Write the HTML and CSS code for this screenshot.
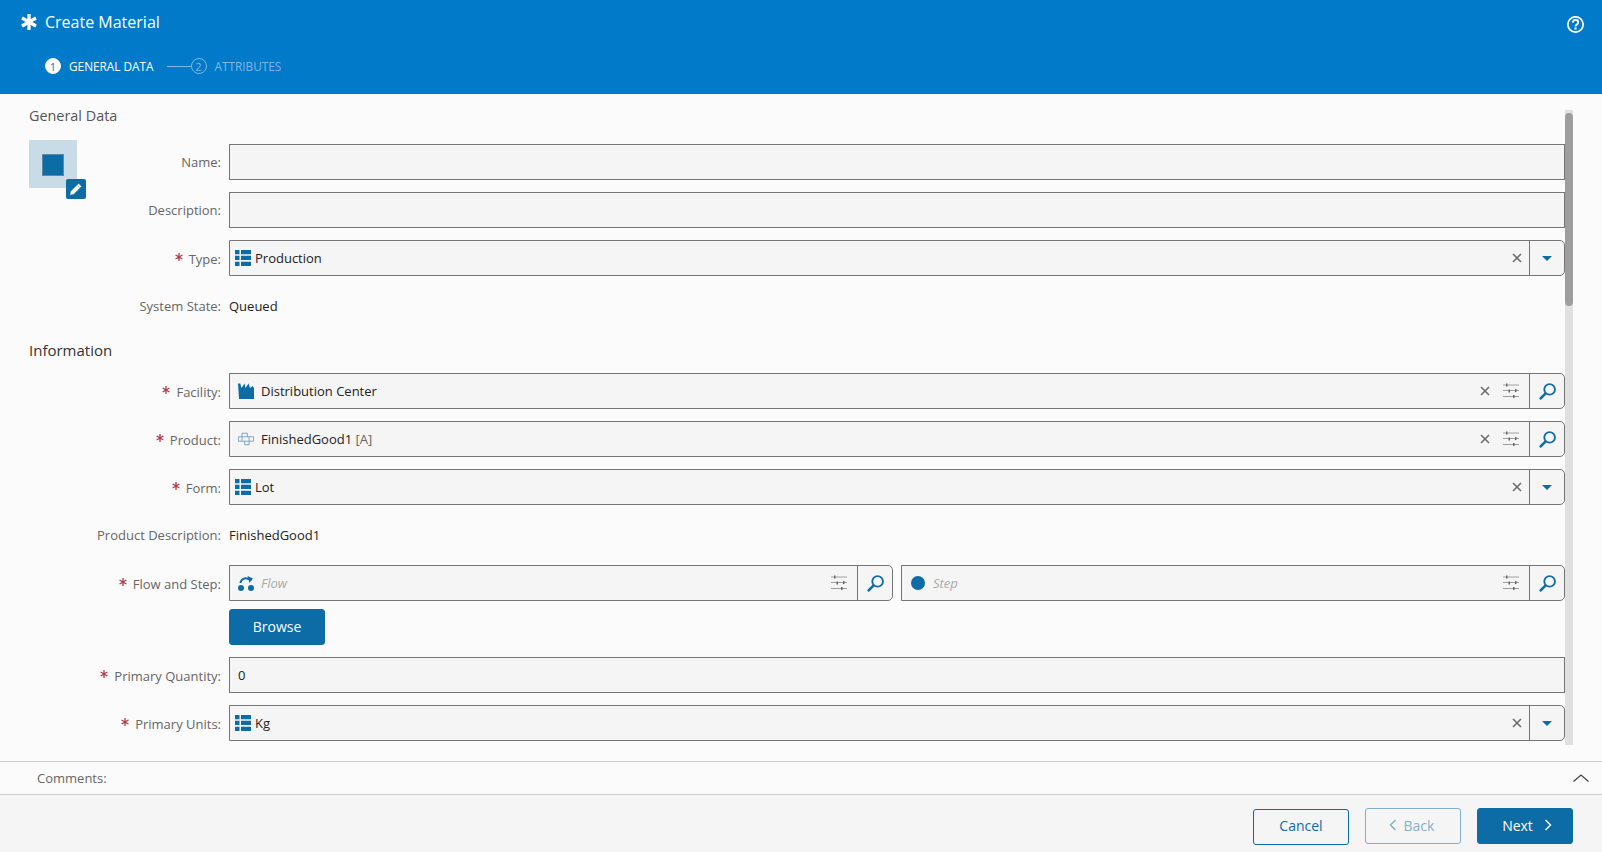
FILE: index.html
```html
<!DOCTYPE html>
<html lang="en">
<head>
<meta charset="utf-8">
<title>Create Material</title>
<link rel="stylesheet" href="styles.css">
</head>
<body>
<svg class="defs" width="0" height="0" aria-hidden="true">
  <symbol id="i-list" viewBox="0 0 16 16"><path d="M0 0h4.500v4.300H0zM6 0h10v4.300H6zM0 5.800h4.500v4.300H0zM6 5.800h10v4.300H6zM0 11.700h4.500V16H0zM6 11.700h10V16H6z" fill="currentColor"/></symbol>
  <symbol id="i-x" viewBox="0 0 10 10"><path d="M1 1l8 8M9 1L1 9" stroke="currentColor" stroke-width="1.600" fill="none"/></symbol>
  <symbol id="i-sliders" viewBox="0 0 16 16"><path d="M0 2h16M0 7.500h16M0 13.500h16" stroke="#a0a0a0" fill="none"/><path d="M3 .5h1.500v3H3zM12 6h1.500v3H12zM5.500 6.500h1.500v3H5.500zM10 12h1.500v3H10z" fill="#666"/></symbol>
  <symbol id="i-search" viewBox="0 0 16 16"><circle cx="10" cy="6" r="5" stroke="currentColor" stroke-width="1.700" fill="none"/><path d="M6.500 9.500L.8 15.200" stroke="currentColor" stroke-width="2.400" fill="none"/></symbol>
  <symbol id="i-star" viewBox="0 0 10 10"><path d="M5 0v10M.7 2.500l8.600 5M9.300 2.500l-8.600 5" stroke="currentColor" stroke-width="1.600" fill="none"/></symbol>
</svg>

<header class="top">
  <div class="title-bar">
    <div class="title-group">
      <svg class="title-icon" viewBox="0 0 16 16"><path d="M8 0v16M1 4l14 8M15 4L1 12" stroke="#fff" stroke-width="3.200" fill="none"/></svg>
      <span class="title">Create Material</span>
    </div>
    <svg class="help" viewBox="0 0 16 16"><circle cx="8" cy="8" r="7.200" stroke="#fff" stroke-width="1.600" fill="none"/><path d="M5.400 6.200C5.500 4.600 6.600 3.700 8 3.700c1.500 0 2.600 1 2.600 2.300 0 1.900-2.600 2-2.600 3.800" stroke="#fff" stroke-width="1.700" fill="none"/><rect x="7" y="10.800" width="2" height="2" fill="#fff"/></svg>
  </div>
  <div class="steps">
    <span class="step-num active">1</span>
    <span class="step-label active">GENERAL DATA</span>
    <span class="step-line"></span>
    <span class="step-num">2</span>
    <span class="step-label">ATTRIBUTES</span>
  </div>
</header>

<main class="content">
  <div class="form">
    <section class="section">
      <h2 class="heading general">General Data</h2>
      <div class="tile">
        <span class="tile-square"></span>
        <span class="tile-edit">
          <svg viewBox="0 0 14 14" width="14" height="14"><path d="M9.600 1.300l3.100 3.100-8 8L.8 13.200l.8-3.900zM8.500 3.400l2.100 2.100" fill="#fff" stroke="#0d6ca6" stroke-width=".6"/></svg>
        </span>
      </div>
      <div class="row"><label class="label bare">Name:</label><div class="field plain"></div></div>
      <div class="row"><label class="label bare">Description:</label><div class="field plain"></div></div>
      <div class="row"><label class="label"><svg class="req"><use href="#i-star"/></svg>Type:</label>
        <div class="field">
          <svg class="ic-list"><use href="#i-list"/></svg><span class="val list-val">Production</span>
          <svg class="ic-x"><use href="#i-x"/></svg>
          <span class="btn-cell"><span class="caret"></span></span>
        </div>
      </div>
      <div class="row"><label class="label bare">System State:</label><span class="val">Queued</span></div>
    </section>

    <section class="section">
      <h2 class="heading info">Information</h2>
      <div class="row"><label class="label"><svg class="req"><use href="#i-star"/></svg>Facility:</label>
        <div class="field">
          <svg class="ic-lead" viewBox="0 0 16 16"><path d="M0 .5h2.200L3.500 5 6.500.5 7.500 5l3-4.500L12 5l2.500-2L16 5v11H1z" fill="#0d6ca6"/></svg>
          <span class="val">Distribution Center</span>
          <svg class="ic-x lookup-x"><use href="#i-x"/></svg>
          <svg class="ic-sliders"><use href="#i-sliders"/></svg>
          <span class="btn-cell"><svg class="ic-search"><use href="#i-search"/></svg></span>
        </div>
      </div>
      <div class="row"><label class="label"><svg class="req"><use href="#i-star"/></svg>Product:</label>
        <div class="field">
          <svg class="ic-lead" viewBox="0 0 18 16"><path d="M.5 5.500h17v5H.5zM4.500 5.500V1.500h6v4M7.500 10.500v4h5v-4" fill="none" stroke="#6f9ec2"/><path d="M4.500 5.500v5M12.500 5.500v5" stroke="#6f9ec2" fill="none"/></svg>
          <span class="val">FinishedGood1 <span class="muted">[A]</span></span>
          <svg class="ic-x lookup-x"><use href="#i-x"/></svg>
          <svg class="ic-sliders"><use href="#i-sliders"/></svg>
          <span class="btn-cell"><svg class="ic-search"><use href="#i-search"/></svg></span>
        </div>
      </div>
      <div class="row"><label class="label"><svg class="req"><use href="#i-star"/></svg>Form:</label>
        <div class="field">
          <svg class="ic-list"><use href="#i-list"/></svg><span class="val list-val">Lot</span>
          <svg class="ic-x"><use href="#i-x"/></svg>
          <span class="btn-cell"><span class="caret"></span></span>
        </div>
      </div>
      <div class="row"><label class="label bare">Product Description:</label><span class="val">FinishedGood1</span></div>
      <div class="row row-tight"><label class="label"><svg class="req"><use href="#i-star"/></svg>Flow and Step:</label>
        <div class="pair">
          <div class="field">
            <svg class="ic-lead" viewBox="0 0 16 16"><path d="M2.500 8C3 4 7 2 11 4.500" stroke="#0d6ca6" stroke-width="2" fill="none"/><path d="M9.500 1L15 3.500 11.500 8z" fill="#0d6ca6"/><circle cx="3" cy="13" r="3" fill="#0d6ca6"/><circle cx="13" cy="13" r="3" fill="#0d6ca6"/></svg>
            <span class="placeholder">Flow</span>
            <svg class="ic-sliders"><use href="#i-sliders"/></svg>
            <span class="btn-cell"><svg class="ic-search"><use href="#i-search"/></svg></span>
          </div>
          <div class="field">
            <span class="dot"></span>
            <span class="placeholder">Step</span>
            <svg class="ic-sliders"><use href="#i-sliders"/></svg>
            <span class="btn-cell"><svg class="ic-search"><use href="#i-search"/></svg></span>
          </div>
        </div>
      </div>
      <div class="row"><span class="label"></span><button class="btn primary browse">Browse</button></div>
      <div class="row"><label class="label"><svg class="req"><use href="#i-star"/></svg>Primary Quantity:</label><div class="field plain"><span class="val">0</span></div></div>
      <div class="row"><label class="label"><svg class="req"><use href="#i-star"/></svg>Primary Units:</label>
        <div class="field">
          <svg class="ic-list"><use href="#i-list"/></svg><span class="val list-val">Kg</span>
          <svg class="ic-x"><use href="#i-x"/></svg>
          <span class="btn-cell"><span class="caret"></span></span>
        </div>
      </div>
    </section>
  </div>
  <div class="scrollbar"><div class="thumb"></div></div>
</main>

<div class="comments">
  <span class="comments-label">Comments:</span>
  <svg class="chevron" viewBox="0 0 16 8"><path d="M.5 7.500L8 1l7.500 6.500" stroke="#444" stroke-width="1.200" fill="none"/></svg>
</div>

<footer class="footer">
  <button class="btn outline cancel">Cancel</button>
  <button class="btn outline disabled"><svg class="btn-chev" viewBox="0 0 8 12"><path d="M6.500 1L1.500 6l5 5" stroke="currentColor" stroke-width="1.400" fill="none"/></svg>Back</button>
  <button class="btn primary next">Next<svg class="btn-chev after" viewBox="0 0 8 12"><path d="M1.500 1l5 5-5 5" stroke="currentColor" stroke-width="1.400" fill="none"/></svg></button>
</footer>
</body>
</html>
```

FILE: styles.css
```css
* { box-sizing: border-box; }
html, body { height: 100%; }
body {
  margin: 0;
  height: 852px;
  overflow: hidden;
  display: flex;
  flex-direction: column;
  background: #fbfbfb;
  font-family: "Open Sans", "Noto Sans", sans-serif;
  font-size: 13px;
  color: #222;
}
.defs { position: absolute; }

.top {
  height: 94px;
  flex: none;
  background: #007ac9;
  color: #fff;
  padding: 0 19px 0 21px;
}
.title-bar {
  height: 44px;
  display: flex;
  align-items: center;
  justify-content: space-between;
}
.title-group { display: flex; align-items: center; gap: 8px; }
.title-icon { width: 16px; height: 16px; }
.title { font-size: 16px; line-height: 22px; }
.help { width: 17px; height: 17px; margin-top: 4px; margin-right: -1px; }
.steps {
  display: flex;
  align-items: center;
  height: 16px;
  margin-top: 14px;
  padding-left: 24px;
  font-size: 11.800px;
  color: #7fb9e2;
}
.step-num {
  width: 16px;
  height: 16px;
  border: 1px solid #7fb9e2;
  border-radius: 50%;
  display: flex;
  align-items: center;
  justify-content: center;
  font-size: 11px;
}
.step-num.active { background: #fff; border-color: #fff; color: #007ac9; }
.step-label { margin-left: 8px; }
.step-label.active { color: #fff; }
.step-line { width: 24px; height: 1px; background: #7fb9e2; margin-left: 13px; }

.content {
  flex: 1;
  min-height: 0;
  display: flex;
  padding: 0 29px;
  overflow: hidden;
}
.form { flex: 1; min-width: 0; padding-top: 12px; }
.section { position: relative; }
.heading { margin: 0; font-weight: 400; line-height: 20px; height: 20px; }
.heading.general { font-size: 14.400px; font-weight: 400; color: #555; margin-bottom: 18px; }
.heading.info { font-size: 15px; color: #333; margin-top: 16px; margin-bottom: 13px; }

.tile {
  position: absolute;
  left: 0;
  top: 34px;
  width: 48px;
  height: 48px;
  background: #c8dce8;
  display: flex;
  align-items: center;
  justify-content: center;
}
.tile-square { width: 22px; height: 22px; background: #0d6ca6; outline: 1px solid #5d87ad; outline-offset: -1px; margin-top: 1px; }
.tile-edit {
  position: absolute;
  left: 37px;
  top: 39px;
  width: 20px;
  height: 20px;
  border-radius: 2px;
  background: #0d6ca6;
  display: flex;
  align-items: center;
  justify-content: center;
}

.row {
  display: grid;
  grid-template-columns: 192px 1fr;
  column-gap: 8px;
  align-items: center;
  min-height: 36px;
  margin-bottom: 12px;
}
.row-tight { margin-bottom: 8px; }
.label {
  color: #666;
  text-align: right;
  display: block;
  line-height: 18px;
  padding-top: 2px;
}
.label.bare { padding-top: 0; }
.req { width: 8px; height: 8px; color: #b03a48; margin-right: 6px; vertical-align: 3px; }
.pair { display: grid; grid-template-columns: 1fr 1fr; column-gap: 8px; }

.field {
  height: 36px;
  border: 1px solid #757575;
  border-radius: 0 5px 5px 0;
  background: #f5f5f5;
  display: flex;
  align-items: center;
  min-width: 0;
  padding-left: 8px;
}
.field.plain { border-radius: 0; }
.val { line-height: 18px; color: #222; }
.list-val { margin-left: 4px; }
.muted { color: #666; }
.placeholder { font-style: italic; color: #aaa; font-size: 13px; }
.ic-list { width: 16px; height: 16px; color: #0d6ca6; margin-left: -3px; margin-right: 0; }
.ic-lead { width: 16px; height: 16px; margin-right: 7px; flex: none; }
.dot { width: 14px; height: 14px; border-radius: 50%; background: #0d6ca6; margin-right: 8px; margin-left: 1px; flex: none; }
.ic-x { width: 10px; height: 10px; color: #6b6b6b; margin-left: auto; margin-right: 7px; flex: none; }
.lookup-x { margin-right: 13px; }
.ic-sliders { width: 16px; height: 16px; margin-left: 0; margin-right: 10px; flex: none; }
.placeholder + .ic-sliders { margin-left: auto; }
.btn-cell {
  width: 35px;
  height: 34px;
  flex: none;
  border-left: 1px solid #757575;
  display: flex;
  align-items: center;
  justify-content: center;
}
.caret { width: 0; height: 0; border: 5px solid transparent; border-top-color: #0d6ca6; border-bottom: 0; }
.ic-search { width: 17px; height: 17px; color: #0d6ca6; }

.scrollbar {
  width: 8px;
  flex: none;
  margin-top: 16px;
  margin-bottom: 16px;
  background: #e0e0e0;
}
.thumb {
  margin-top: 3px;
  height: 193px;
  background: #9e9e9e;
  border-radius: 4px;
}

.comments {
  flex: none;
  height: 34px;
  border-top: 1px solid #ccc;
  border-bottom: 1px solid #ccc;
  display: flex;
  align-items: center;
  justify-content: space-between;
  padding: 0 13px 0 37px;
  color: #666;
}
.chevron { width: 16px; height: 8px; }

.footer {
  flex: none;
  height: 57px;
  background: #f5f5f5;
  display: flex;
  justify-content: flex-end;
  align-items: flex-start;
  gap: 16px;
  padding: 13px 29px 0 0;
}
.btn {
  width: 96px;
  height: 36px;
  border-radius: 3px;
  font: inherit;
  font-size: 14px;
  display: inline-flex;
  align-items: center;
  justify-content: center;
  padding: 0 0 2px;
}
.primary { background: #0d6ca6; border: 1px solid #0d6ca6; color: #fff; }
.outline { background: transparent; border: 1px solid #0d6ca6; color: #0d6ca6; }
.cancel { margin-top: 1px; padding-bottom: 3px; }
.disabled { opacity: .5; padding-right: 3px; }
.next { padding-left: 4px; }
.btn-chev { width: 8px; height: 12px; margin-right: 7px; }
.btn-chev.after { margin-right: 0; margin-left: 11px; }
```
